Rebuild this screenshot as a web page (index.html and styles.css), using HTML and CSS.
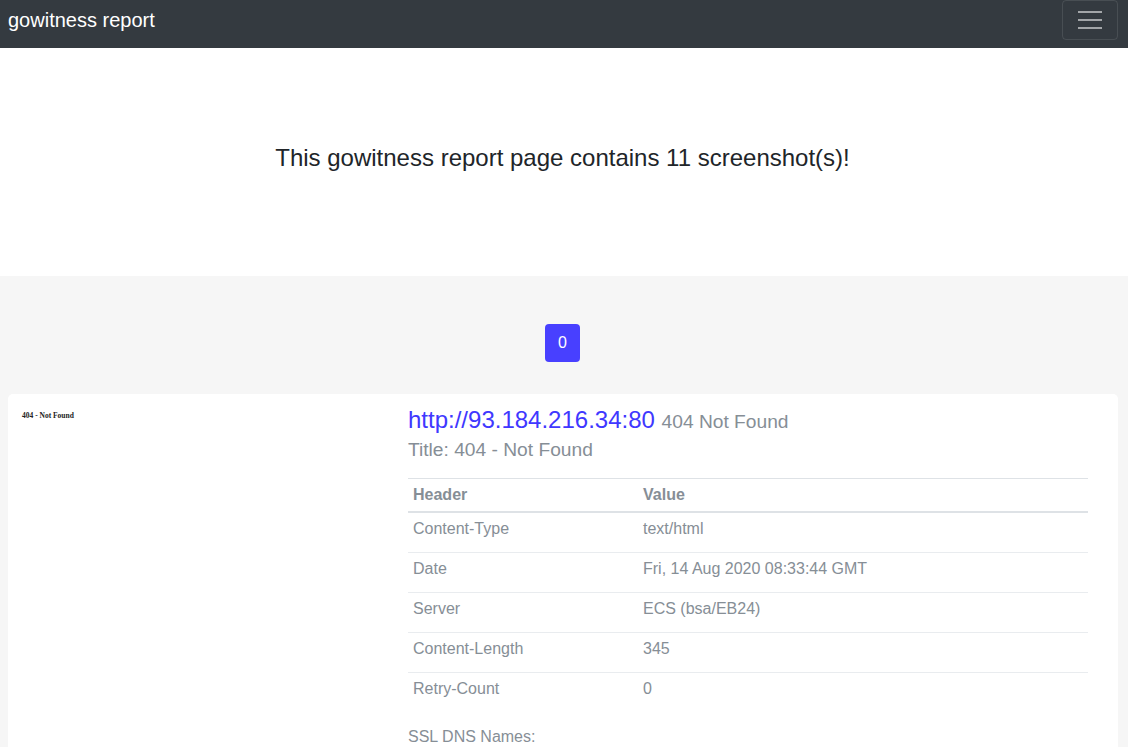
FILE: index.html
```html
<!DOCTYPE html>
<html lang="en">
<head>
<meta charset="utf-8">
<title>gowitness report</title>
<link rel="stylesheet" href="styles.css">
</head>
<body>
<nav class="navbar">
  <span class="brand">gowitness report</span>
  <button class="toggler" type="button" aria-label="Toggle navigation">
    <span class="bar"></span><span class="bar"></span><span class="bar"></span>
  </button>
</nav>
<section class="jumbo">
  <p class="lead">This gowitness report page contains 11 screenshot(s)!</p>
</section>
<main class="album">
  <div class="pager">
    <a class="page-btn" href="#">0</a>
  </div>
  <div class="card">
    <div class="thumb">
      <span class="thumb-text">404 - Not Found</span>
    </div>
    <div class="details">
      <h4 class="url-line"><a class="url" href="#">http://93.184.216.34:80</a> <small class="muted">404 Not Found</small></h4>
      <h5 class="title-line">Title: 404 - Not Found</h5>
      <table class="headers">
        <thead>
          <tr><th class="col-h">Header</th><th>Value</th></tr>
        </thead>
        <tbody>
          <tr><td>Content-Type</td><td>text/html</td></tr>
          <tr><td>Date</td><td>Fri, 14 Aug 2020 08:33:44 GMT</td></tr>
          <tr><td>Server</td><td>ECS (bsa/EB24)</td></tr>
          <tr><td>Content-Length</td><td>345</td></tr>
          <tr><td>Retry-Count</td><td>0</td></tr>
        </tbody>
      </table>
      <p class="ssl">SSL DNS Names:</p>
    </div>
  </div>
</main>
</body>
</html>
```
FILE: styles.css
```css
* { box-sizing: border-box; }
html, body { margin: 0; padding: 0; }
body {
  font-family: "Liberation Sans", Arial, sans-serif;
  font-size: 16px;
  line-height: 1.5;
  color: #212529;
  background: #f6f6f6;
}
.navbar {
  height: 48px;
  background: #343a40;
  display: flex;
  justify-content: space-between;
  align-items: flex-start;
  padding: 0 10px 0 8px;
}
.brand {
  color: #fff;
  font-size: 20px;
  line-height: 40px;
}
.toggler {
  width: 56px;
  height: 40px;
  margin-top: 0;
  background: transparent;
  border: 1px solid rgba(255,255,255,0.1);
  border-radius: 4px;
  display: flex;
  flex-direction: column;
  align-items: center;
  justify-content: center;
  gap: 6px;
  padding: 0;
}
.toggler .bar {
  display: block;
  width: 24px;
  height: 2px;
  background: rgba(255,255,255,0.55);
}
.jumbo {
  background: #fff;
  height: 228px;
  display: flex;
  align-items: center;
  justify-content: center;
  margin: 0;
}
.lead {
  margin: 0 0 0 -3px;
  font-size: 24px;
  line-height: 36px;
  padding-bottom: 8px;
  color: #212529;
}
.album {
  padding: 48px 10px 0 8px;
}
.pager {
  display: flex;
  justify-content: center;
  margin-bottom: 32px;
  padding-right: 1px;
}
.page-btn {
  display: block;
  width: 35px;
  height: 38px;
  line-height: 38px;
  text-align: center;
  color: #fff;
  background: #4840ff;
  border-radius: 4px;
  text-decoration: none;
  font-size: 16px;
}
.card {
  background: #fff;
  border-radius: 5px;
  display: flex;
  min-height: 400px;
}
.thumb {
  width: 386px;
  flex: none;
  padding: 17px 0 0 14px;
}
.thumb-text {
  display: block;
  font-family: "Liberation Serif", "Times New Roman", serif;
  font-weight: bold;
  font-size: 7.5px;
  line-height: 10px;
  color: #222;
}
.details {
  width: 694px;
  padding: 10px 0 0 14px;
}
.url-line {
  margin: 0;
  font-weight: normal;
  font-size: 24px;
  line-height: 32px;
}
.url {
  color: #4038ff;
  text-decoration: none;
}
.muted { color: #868e96; }
.url-line small { font-size: 19.2px; }
.title-line {
  margin: 0;
  font-weight: normal;
  font-size: 19.2px;
  line-height: 24px;
  color: #868e96;
}
.headers {
  width: 680px;
  border-collapse: collapse;
  margin-top: 16px;
  color: #868e96;
}
.headers th, .headers td {
  text-align: left;
  vertical-align: top;
}
.headers th {
  font-weight: bold;
  padding: 4px 5px 4px;
  border-top: 1px solid #dee2e6;
  border-bottom: 2px solid #dee2e6;
  line-height: 24px;
}
.headers .col-h { width: 230px; }
.headers td {
  padding: 4px 5px 11px;
  line-height: 24px;
  border-top: 1px solid #e9ecef;
}
.headers tbody tr:first-child td { border-top: none; }
.ssl {
  margin: 13px 0 0;
  color: #868e96;
}
```
